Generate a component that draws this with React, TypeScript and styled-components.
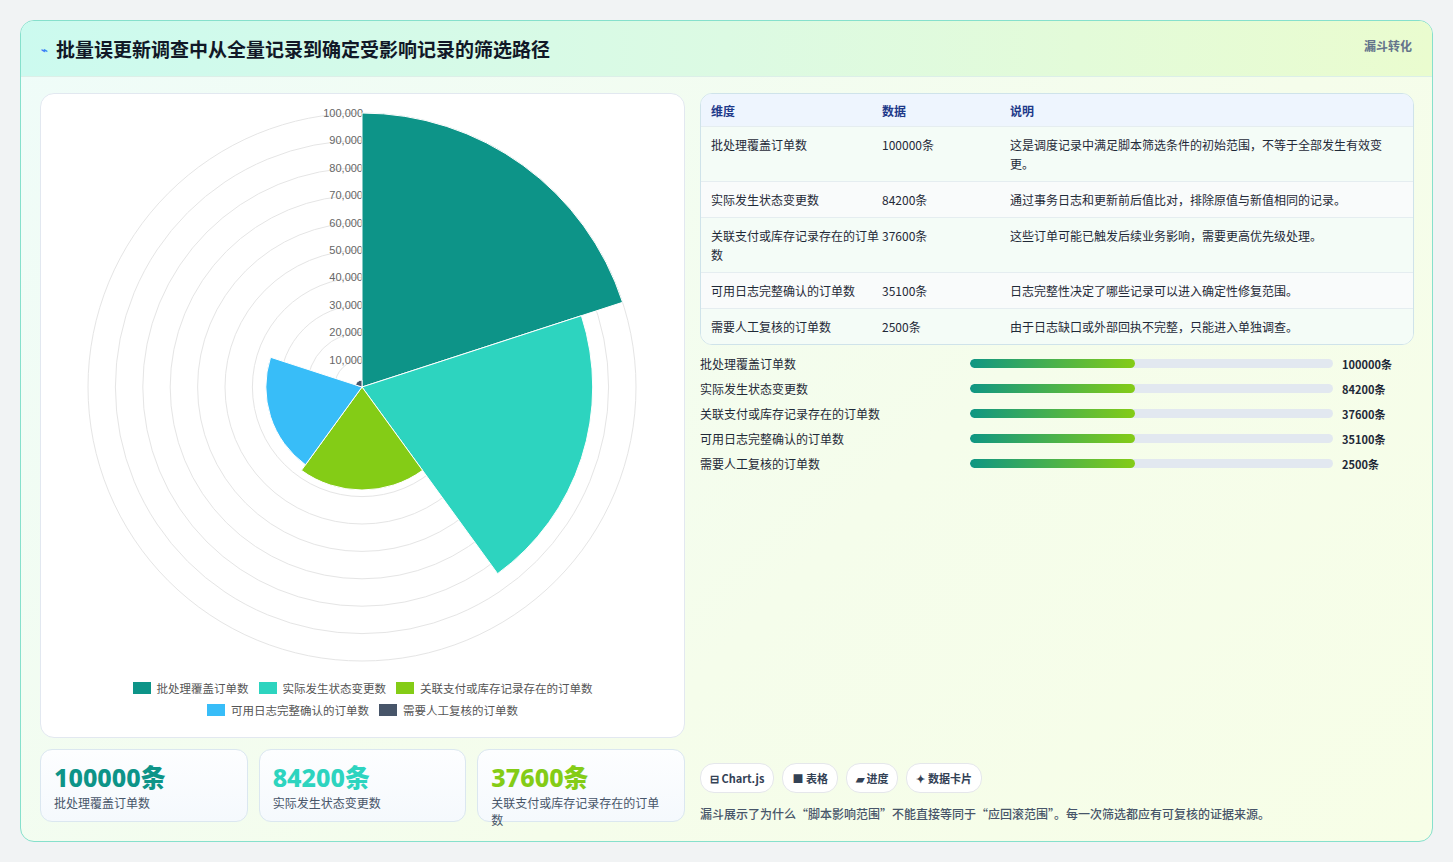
import React from "react";
import styled, { createGlobalStyle } from "styled-components";

const G = createGlobalStyle`
  body { margin: 0; background: #f1f3f4; font-family: "Noto Sans CJK SC", "Noto Sans", sans-serif; }
`;
const Page = styled.div`padding: 20px 20px 20px 20px; height: 862px; box-sizing: border-box;`;
const Card = styled.div`
  border: 1px solid #86e0cc; border-radius: 14px; overflow: hidden; height: 822px; box-sizing: border-box;
  background: linear-gradient(135deg, #effcf9 0%, #f5fdeb 60%, #f7fee7 100%);
  display: flex; flex-direction: column; width: 1413px;
`;
const Header = styled.div`
  height: 56px; box-sizing: border-box; display: flex; justify-content: space-between; align-items: flex-start;
  padding: 14px 20px 0 20px;
  background: linear-gradient(90deg, #ccfaef 0%, #dcfae3 50%, #eafccf 100%);
  border-bottom: 1px solid #dcefe8;
`;
const Title = styled.div`font-size: 19px; font-weight: 700; color: #111827; display: flex; align-items: center; gap: 8px;`;
const Tag = styled.div`font-size: 12px; font-weight: 700; color: #64748b; margin-top: 2px;`;
const Body = styled.div`display: grid; grid-template-columns: 645px 714px; gap: 15px; padding: 16px 19px 0 19px;`;
const Col = styled.div`display: flex; flex-direction: column;`;
const ChartBox = styled.div`
  height: 645px; box-sizing: border-box; background: #fff; border: 1px solid #e2e8f0; border-radius: 14px;
  display: flex; flex-direction: column; align-items: center;
`;
const Legend = styled.div`display: flex; flex-wrap: wrap; justify-content: center; gap: 6px 10px; width: 520px; margin-top: 6px;`;
const LItem = styled.div`display: flex; align-items: center; gap: 6px; font-size: 11.5px; color: #555;`;
const Sw = styled.span<{ c: string }>`width: 18px; height: 12px; background: ${p => p.c}; display: inline-block;`;
const Stats = styled.div`display: grid; grid-template-columns: repeat(3, 1fr); gap: 11px; margin-top: 11px;`;
const Stat = styled.div`
  height: 73px; box-sizing: border-box; border: 1px solid #dbe7f0; border-radius: 12px; padding: 10px 13px;
  background: linear-gradient(180deg, #fdfeff, #f5f9fd);
`;
const Num = styled.div<{ c: string }>`font-size: 25px; font-weight: 800; color: ${p => p.c}; line-height: 34px; font-family: "Noto Sans", "Noto Sans CJK SC", sans-serif;`;
const SL = styled.div`font-size: 12px; color: #475569;`;
const Table = styled.div`border: 1px solid #cfe3ea; border-radius: 12px; overflow: hidden; background: #fff;`;
const Row = styled.div<{ h?: boolean; alt?: boolean }>`
  display: grid; grid-template-columns: 171px 128px 1fr; padding: 0 10px;
  align-items: start; font-size: 12px; line-height: 19px;
  color: ${p => (p.h ? "#1e3a8a" : "#1f2937")}; font-weight: ${p => (p.h ? 700 : 400)};
  background: ${p => (p.h ? "#eef5fe" : p.alt ? "#f9fbfb" : "#f4fcf7")};
  border-bottom: 1px solid #e5edf0; padding-top: ${p => (p.h ? 7 : 8)}px; padding-bottom: ${p => (p.h ? 6 : 8)}px;
  &:last-child { border-bottom: none; }
`;
const Bars = styled.div`display: flex; flex-direction: column; gap: 6px; margin-top: 9px;`;
const BarRow = styled.div`display: grid; grid-template-columns: 270px 372px 1fr; gap: 0; align-items: center; font-size: 12px; color: #1f2937; height: 19px;`;
const Track = styled.div`height: 9px; border-radius: 5px; background: #e2e8f0; overflow: hidden; margin-right: 9px;`;
const Fill = styled.div`height: 100%; border-radius: 5px; background: linear-gradient(90deg, #0f9683, #84cc16);`;
const BarVal = styled.div`font-weight: 700; font-size: 11px; padding-left: 0px;`;
const Spacer = styled.div`flex: 1;`;
const Chips = styled.div`display: flex; gap: 8px;`;
const Chip = styled.div`
  height: 28px; padding: 0 9px; border-radius: 14px; background: #fff; border: 1px solid #e5e7eb;
  font-size: 11px; font-weight: 700; color: #334155; display: flex; align-items: center; gap: 3px;
`;
const Note = styled.div`font-size: 12px; color: #475569; margin-top: 12px; font-weight: 500;`;

const data = [
  { n: "批处理覆盖订单数", v: 100000, c: "#0d9488", d: "这是调度记录中满足脚本筛选条件的初始范围，不等于全部发生有效变更。" },
  { n: "实际发生状态变更数", v: 84200, c: "#2dd4bf", d: "通过事务日志和更新前后值比对，排除原值与新值相同的记录。" },
  { n: "关联支付或库存记录存在的订单数", v: 37600, c: "#84cc16", d: "这些订单可能已触发后续业务影响，需要更高优先级处理。" },
  { n: "可用日志完整确认的订单数", v: 35100, c: "#38bdf8", d: "日志完整性决定了哪些记录可以进入确定性修复范围。" },
  { n: "需要人工复核的订单数", v: 2500, c: "#475569", d: "由于日志缺口或外部回执不完整，只能进入单独调查。" },
];

function Polar() {
  const cx = 321, cy = 293, R = 274;
  const pt = (r: number, a: number) => [cx + r * Math.cos(a), cy + r * Math.sin(a)];
  const seg = (r: number, i: number) => {
    const a0 = -Math.PI / 2 + (i * 2 * Math.PI) / 5, a1 = a0 + (2 * Math.PI) / 5;
    const [x0, y0] = pt(r, a0), [x1, y1] = pt(r, a1);
    return `M${cx},${cy} L${x0},${y0} A${r},${r} 0 0 1 ${x1},${y1} Z`;
  };
  return (
    <svg width="643" height="580" viewBox="0 0 643 580">
      {Array.from({ length: 10 }, (_, k) => (
        <circle key={k} cx={cx} cy={cy} r={(R * (k + 1)) / 10} fill="none" stroke="#e5e5e5" strokeWidth="1" />
      ))}
      {Array.from({ length: 10 }, (_, k) => (
        <text key={k} x={cx + 1} y={cy - (R * (k + 1)) / 10 + 4} textAnchor="end" fontSize="11" fill="#666" fontFamily="Liberation Sans, sans-serif">
          {((k + 1) * 10000).toLocaleString("en-US")}
        </text>
      ))}
      {data.map((d, i) => (
        <path key={i} d={seg((R * d.v) / 100000, i)} fill={d.c} stroke="#fff" strokeWidth="1" />
      ))}
    </svg>
  );
}

export default function App() {
  return (
    <Page>
      <G />
      <Card>
        <Header>
          <Title><span style={{ color: "#3b82f6", fontSize: 11 }}>⌁</span>批量误更新调查中从全量记录到确定受影响记录的筛选路径</Title>
          <Tag>漏斗转化</Tag>
        </Header>
        <Body>
          <Col>
            <ChartBox>
              <Polar />
              <Legend>
                {data.map(d => (
                  <LItem key={d.n}><Sw c={d.c} />{d.n}</LItem>
                ))}
              </Legend>
            </ChartBox>
            <Stats>
              {data.slice(0, 3).map(d => (
                <Stat key={d.n}><Num c={d.c}>{d.v}条</Num><SL>{d.n}</SL></Stat>
              ))}
            </Stats>
          </Col>
          <Col>
            <Table>
              <Row h><span>维度</span><span>数据</span><span>说明</span></Row>
              {data.map((d, i) => (
                <Row key={d.n} alt={i % 2 === 1}><span>{d.n}</span><span>{d.v}条</span><span>{d.d}</span></Row>
              ))}
            </Table>
            <Bars>
              {data.map(d => (
                <BarRow key={d.n}>
                  <span>{d.n}</span>
                  <Track><Fill style={{ width: "45.5%" }} /></Track>
                  <BarVal>{d.v}条</BarVal>
                </BarRow>
              ))}
            </Bars>
            <Spacer />
            <Chips>
              <Chip>⊟ Chart.js</Chip>
              <Chip>■ 表格</Chip>
              <Chip>▰ 进度</Chip>
              <Chip>✦ 数据卡片</Chip>
            </Chips>
            <Note>漏斗展示了为什么“脚本影响范围”不能直接等同于“应回滚范围”。每一次筛选都应有可复核的证据来源。</Note>
          </Col>
        </Body>
        <div style={{ height: 19 }} />
      </Card>
    </Page>
  );
}
